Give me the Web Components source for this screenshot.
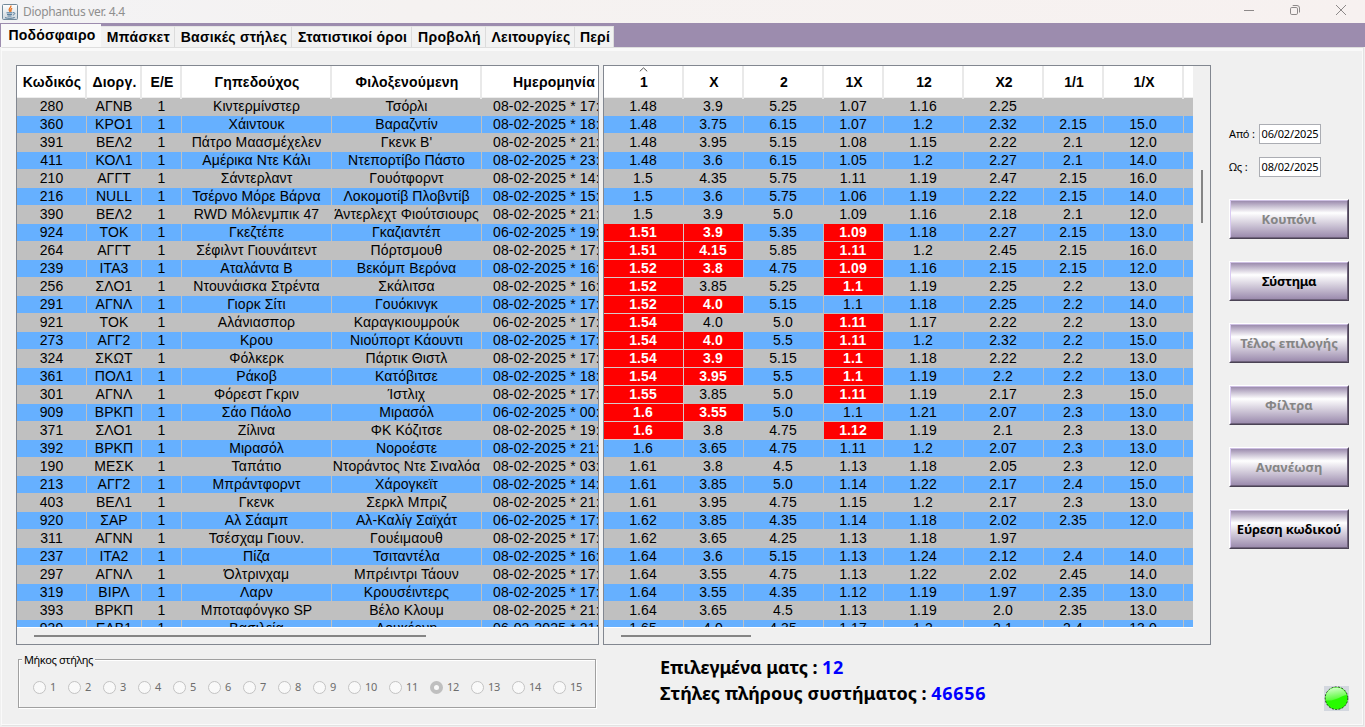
<!DOCTYPE html>
<html lang="el">
<head>
<meta charset="utf-8">
<title>Diophantus ver. 4.4</title>
<style>
  body {
    margin: 0;
    overflow: hidden;
    background: #f0f0f0;
    font-family: "Liberation Sans", Arial, sans-serif;
    color: #000;
  }
</style>
</head>
<body>
<app-window></app-window>

<script>
  const UI_FONT = `"Noto Sans", "Open Sans", sans-serif`;

  const MATCHES = `
280|ΑΓΝΒ|1|Κιντερμίνστερ|Τσόρλι|08-02-2025 * 17:|1.48|3.9|5.25|1.07|1.16|2.25||
360|ΚΡΟ1|1|Χάιντουκ|Βαραζντίν|08-02-2025 * 18:|1.48|3.75|6.15|1.07|1.2|2.32|2.15|15.0
391|ΒΕΛ2|1|Πάτρο Μαασμέχελεν|Γκενκ Β'|08-02-2025 * 21:|1.48|3.95|5.15|1.08|1.15|2.22|2.1|12.0
411|ΚΟΛ1|1|Αμέρικα Ντε Κάλι|Ντεπορτίβο Πάστο|08-02-2025 * 23:|1.48|3.6|6.15|1.05|1.2|2.27|2.1|14.0
210|ΑΓΓΤ|1|Σάντερλαντ|Γουότφορντ|08-02-2025 * 14:|1.5|4.35|5.75|1.11|1.19|2.47|2.15|16.0
216|NULL|1|Τσέρνο Μόρε Βάρνα|Λοκομοτίβ Πλοβντίβ|08-02-2025 * 15:|1.5|3.6|5.75|1.06|1.19|2.22|2.15|14.0
390|ΒΕΛ2|1|RWD Μόλενμπικ 47|Άντερλεχτ Φιούτσιουρς|08-02-2025 * 21:|1.5|3.9|5.0|1.09|1.16|2.18|2.1|12.0
924|ΤΟΚ|1|Γκεζτέπε|Γκαζιαντέπ|06-02-2025 * 19:|!1.51|!3.9|5.35|!1.09|1.18|2.27|2.15|13.0
264|ΑΓΓΤ|1|Σέφιλντ Γιουνάιτεντ|Πόρτσμουθ|08-02-2025 * 17:|!1.51|!4.15|5.85|!1.11|1.2|2.45|2.15|16.0
239|ΙΤΑ3|1|Αταλάντα Β|Βεκόμπ Βερόνα|08-02-2025 * 16:|!1.52|!3.8|4.75|!1.09|1.16|2.15|2.15|12.0
256|ΣΛΟ1|1|Ντουνάισκα Στρέντα|Σκάλιτσα|08-02-2025 * 16:|!1.52|3.85|5.25|!1.1|1.19|2.25|2.2|13.0
291|ΑΓΝΛ|1|Γιορκ Σίτι|Γουόκινγκ|08-02-2025 * 17:|!1.52|!4.0|5.15|1.1|1.18|2.25|2.2|14.0
921|ΤΟΚ|1|Αλάνιασπορ|Καραγκιουμρούκ|06-02-2025 * 17:|!1.54|4.0|5.0|!1.11|1.17|2.22|2.2|13.0
273|ΑΓΓ2|1|Κρου|Νιούπορτ Κάουντι|08-02-2025 * 17:|!1.54|!4.0|5.5|!1.11|1.2|2.32|2.2|15.0
324|ΣΚΩΤ|1|Φόλκερκ|Πάρτικ Θιστλ|08-02-2025 * 17:|!1.54|!3.9|5.15|!1.1|1.18|2.22|2.2|13.0
361|ΠΟΛ1|1|Ράκοβ|Κατόβιτσε|08-02-2025 * 18:|!1.54|!3.95|5.5|!1.1|1.19|2.2|2.2|13.0
301|ΑΓΝΛ|1|Φόρεστ Γκριν|Ίστλιχ|08-02-2025 * 17:|!1.55|3.85|5.0|!1.11|1.19|2.17|2.3|15.0
909|ΒΡΚΠ|1|Σάο Πάολο|Μιρασόλ|06-02-2025 * 00:|!1.6|!3.55|5.0|1.1|1.21|2.07|2.3|13.0
371|ΣΛΟ1|1|Ζίλινα|ΦΚ Κόζιτσε|08-02-2025 * 19:|!1.6|3.8|4.75|!1.12|1.19|2.1|2.3|13.0
392|ΒΡΚΠ|1|Μιρασόλ|Νοροέστε|08-02-2025 * 21:|1.6|3.65|4.75|1.11|1.2|2.07|2.3|13.0
190|ΜΕΣΚ|1|Ταπάτιο|Ντοράντος Ντε Σιναλόα|08-02-2025 * 03:|1.61|3.8|4.5|1.13|1.18|2.05|2.3|12.0
213|ΑΓΓ2|1|Μπράντφορντ|Χάρογκεϊτ|08-02-2025 * 14:|1.61|3.85|5.0|1.14|1.22|2.17|2.4|15.0
403|ΒΕΛ1|1|Γκενκ|Σερκλ Μπριζ|08-02-2025 * 21:|1.61|3.95|4.75|1.15|1.2|2.17|2.3|13.0
920|ΣΑΡ|1|Αλ Σάαμπ|Αλ-Καλίγ Σαϊχάτ|06-02-2025 * 17:|1.62|3.85|4.35|1.14|1.18|2.02|2.35|12.0
311|ΑΓΝΝ|1|Τσέσχαμ Γιουν.|Γουέιμαουθ|08-02-2025 * 17:|1.62|3.65|4.25|1.13|1.18|1.97||
237|ΙΤΑ2|1|Πίζα|Τσιταντέλα|08-02-2025 * 16:|1.64|3.6|5.15|1.13|1.24|2.12|2.4|14.0
297|ΑΓΝΛ|1|Όλτρινχαμ|Μπρέιντρι Τάουν|08-02-2025 * 17:|1.64|3.55|4.75|1.13|1.22|2.02|2.45|14.0
319|ΒΙΡΛ|1|Λαρν|Κρουσέιντερς|08-02-2025 * 17:|1.64|3.55|4.35|1.12|1.19|1.97|2.35|13.0
393|ΒΡΚΠ|1|Μποταφόνγκο SP|Βέλο Κλουμ|08-02-2025 * 21:|1.64|3.65|4.5|1.13|1.19|2.0|2.35|13.0
939|ΕΛΒ1|1|Βασιλεία|Λουκέρνη|06-02-2025 * 21:|1.65|4.0|4.35|1.17|1.2|2.1|2.4|13.0
`.trim().split("\n").map(line => line.split("|"));

  const TABLES = {
    fixtures: {
      widths: [70, 55, 40, 150, 150, 117],
      heads: ["Κωδικός", "Διοργ.", "Ε/Ε", "Γηπεδούχος", "Φιλοξενούμενη", "Ημερομηνία"],
      rows: MATCHES.map(m => m.slice(0, 6))
    },
    odds: {
      widths: [80, 60, 80, 60, 80, 80, 60, 80, 60],
      heads: ["1", "X", "2", "1X", "12", "X2", "1/1", "1/X", ""],
      rows: MATCHES.map(m => [...m.slice(6), ""]),
      sorted: 0
    }
  };

  function render(element, html) {
    element.attachShadow({ mode: "open" }).innerHTML = html;
  }

  class TitleBar extends HTMLElement {
    constructor() {
      super();
      render(this, `
        <style>
          :host {
            display: flex;
            align-items: center;
            height: 23px;
            box-sizing: border-box;
            padding: 0 18px 0 2px;
            background: linear-gradient(90deg, #f3f3f5, #f5f2f1 30%, #f7f1f0);
            font: 12px ${UI_FONT};
            color: #8f8f8f;
          }
          .title { flex: 1; margin-left: 5px; letter-spacing: -0.32px; }
          .controls { display: flex; gap: 34px; margin-top: -3px; }
          svg { display: block; }
        </style>
        <svg width="16" height="16" viewBox="0 0 16 16">
          <defs>
            <linearGradient id="face" x2="0" y2="1"><stop stop-color="#fff"/><stop offset="1" stop-color="#cdd5dc"/></linearGradient>
          </defs>
          <rect x=".5" y=".5" width="15" height="15" rx="1" fill="url(#face)" stroke="#72899a"/>
          <path d="M8.8 1.5c1 2-2.6 2.9-1.5 4.8l1 1.5M10.2 4.4c-1.6.8-1.8 1.6-.8 3.1" fill="none" stroke="#e76f1c" stroke-width="1.3"/>
          <path d="M4.5 8.8h6M5 10.4h5M5.5 12h4M3 13.7c2.5.8 7.5.8 9.7-.2M11 8.7c2.6-.5 2.3 1.8-.2 2.4" fill="none" stroke="#4e7696"/>
        </svg>
        <span class="title"><slot></slot></span>
        <div class="controls">
          <svg width="12" height="12" fill="none" stroke="#8d8989"><path d="M1 6.5h10"/></svg>
          <svg width="12" height="12" fill="none" stroke="#8d8989"><rect x="1.5" y="3.5" width="7" height="7" rx="1.3"/><path d="M3.7 1.5H8a2.5 2.5 0 0 1 2.5 2.5v4.5"/></svg>
          <svg width="12" height="12" fill="none" stroke="#8d8989"><path d="M1 1l10 10M11 1L1 11"/></svg>
        </div>`);
    }
  }

  class TabBar extends HTMLElement {
    constructor() {
      super();
      render(this, `
        <style>
          :host {
            display: flex;
            align-items: flex-end;
            height: 24px;
            padding-left: 1px;
            background: #9c8cae;
          }
        </style>
        <slot></slot>`);
    }
  }

  class TabItem extends HTMLElement {
    constructor() {
      super();
      render(this, `
        <style>
          :host {
            display: block;
            box-sizing: border-box;
            width: var(--w);
            height: 21px;
            padding-left: 2px;
            border-right: 1px solid #dcdcdc;
            border-top: 1px solid #e4e4e4;
            background: #f2f2f2;
            font-size: 14px;
            font-weight: bold;
            line-height: 21px;
            text-align: center;
            white-space: nowrap;
            letter-spacing: var(--ls, 0);
          }
          :host([selected]) {
            height: 23px;
            border: 0;
            background: #f9f9f9;
            line-height: 23px;
          }
        </style>
        <slot></slot>`);
    }
  }

  class DataTable extends HTMLElement {
    constructor() {
      super();
      const { widths, heads, rows, sorted } = TABLES[this.getAttribute("source")];
      const caret = `<svg width="9" height="5" viewBox="0 0 9 5"><path d="M.8 4.3 4.5.9l3.7 3.4" fill="none" stroke="#555"/></svg>`;
      render(this, `
        <style>
          :host {
            display: grid;
            grid-template: 562px 1fr / 1fr var(--bar, 0px);
            box-sizing: border-box;
            width: var(--w);
            height: 580px;
            border: 1px solid #828790;
            background: #f0f0f0;
          }
          .view { overflow: hidden; border-bottom: 1px solid #fff; }
          .row, .head {
            display: grid;
            grid-template-columns: ${widths.map(w => w + "px").join(" ")};
            text-align: center;
            white-space: nowrap;
          }
          .head {
            height: 31px;
            background: #fff;
            border-bottom: 1px solid #ededed;
            font-size: 14px;
            font-weight: bold;
            line-height: 33px;
          }
          .head div {
            position: relative;
            padding-left: 2px;
            border-right: 2px solid #e9e9e9;
            letter-spacing: var(--head-ls, 0);
          }
          .head div:nth-child(6) {
            text-align: var(--date-align, center);
            padding-left: var(--date-head-pad, 2px);
            border-right-width: var(--date-edge, 2px);
          }
          .head svg { position: absolute; top: 1px; left: 35px; }
          .row {
            height: 18px;
            background: #c0c0c0;
            font-size: 14px;
            line-height: 17px;
            letter-spacing: 0.1px;
          }
          .row div {
            height: 17px;
            padding-right: var(--cell-pad, 1px);
            border-right: 1px solid #c0c0c0;
            border-bottom: 1px solid #c0c0c0;
          }
          .row div:nth-child(6) {
            text-align: var(--date-align, center);
            padding-left: var(--date-pad, 0);
            border-right-width: var(--date-edge, 1px);
            letter-spacing: var(--date-ls, 0.1px);
          }
          .row:nth-child(odd) div { background: #66b0ff; }
          .row div.hit {
            background: #f00;
            border-color: #d8c8c8;
            color: #fff;
            font-weight: bold;
          }
          .across, .down { display: flex; }
          .across::before {
            content: "";
            width: var(--thumb);
            height: 2px;
            margin: 7px 0 0 17px;
            background: #858585;
          }
          .down { overflow: hidden; }
          .down::before {
            content: "";
            width: 2px;
            height: 53px;
            margin: 104px 0 0 8px;
            background: #858585;
          }
        </style>
        <div class="view">
          <div class="head">${heads.map((h, i) => `<div>${i === sorted ? caret : ""}${h}</div>`).join("")}</div>
          ${rows.map(row => `<div class="row">${row.map(v =>
            v[0] === "!" ? `<div class="hit">${v.slice(1)}</div>` : `<div>${v}</div>`).join("")}</div>`).join("")}
        </div>
        <div class="down"></div>
        <div class="across"></div>`);
    }
  }

  class DateField extends HTMLElement {
    constructor() {
      super();
      render(this, `
        <style>
          :host {
            display: grid;
            grid-template-columns: 30px 62px;
            height: 20px;
            line-height: 20px;
            font-family: ${UI_FONT};
            font-size: 11px;
            white-space: nowrap;
            letter-spacing: -0.15px;
          }
          .box {
            box-sizing: border-box;
            height: 20px;
            border: 1px solid #abadb3;
            background: #fff;
            line-height: 18px;
            text-align: center;
          }
        </style>
        <span><slot></slot></span>
        <div class="box">${this.getAttribute("value")}</div>`);
    }
  }

  class ActionButton extends HTMLElement {
    constructor() {
      super();
      render(this, `
        <style>
          :host {
            display: block;
            box-sizing: border-box;
            width: 120px;
            height: 40px;
            border: 1px solid;
            border-color: #fff #4b4355 #4b4355 #fff;
          }
          button {
            display: block;
            width: 100%;
            height: 100%;
            padding: 0;
            border: 1px solid;
            border-color: #cdbfe2 #6f637c #6f637c #dacbf2;
            background: linear-gradient(#9c8cae, #fff 33%, #9c8cae);
            color: #000;
            font: bold 13px ${UI_FONT};
            letter-spacing: var(--ls, -0.2px);
            white-space: nowrap;
          }
          button:disabled { color: #858585; letter-spacing: 0; }
        </style>
        <button ${this.hasAttribute("disabled") ? "disabled" : ""}><slot></slot></button>`);
    }
  }

  class RadioStrip extends HTMLElement {
    constructor() {
      super();
      const count = Number(this.getAttribute("count"));
      const value = Number(this.getAttribute("value"));
      const items = Array.from({ length: count }, (_, i) => i + 1);
      render(this, `
        <style>
          :host {
            display: block;
            position: relative;
            box-sizing: border-box;
            width: 578px;
            height: 49px;
            border: 1px solid #a0a0a0;
            box-shadow: 1px 1px #fff, inset 1px 1px #fff;
            font-family: ${UI_FONT};
            font-size: 11px;
          }
          .legend {
            position: absolute;
            top: -8px;
            left: 3px;
            padding: 0 2px;
            background: #f0f0f0;
            line-height: 15px;
            letter-spacing: -0.42px;
          }
          .items { display: flex; padding: 21px 0 0 14px; }
          .item {
            display: flex;
            gap: 4px;
            width: 35px;
            height: 13px;
            line-height: 12px;
            color: #6d6d6d;
            letter-spacing: -0.2px;
          }
          .item.wide { width: 41px; }
          i {
            box-sizing: border-box;
            width: 13px;
            height: 13px;
            border: 1px solid #c3c3c3;
            border-radius: 50%;
            background: #f9f9f9;
          }
          .on i { border: 4px solid #bfbfbf; }
        </style>
        <span class="legend"><slot></slot></span>
        <div class="items">
          ${items.map(n => `<div class="item ${n > 9 ? "wide" : ""} ${n === value ? "on" : ""}"><i></i><span>${n}</span></div>`).join("")}
        </div>`);
    }
  }

  class StatLine extends HTMLElement {
    constructor() {
      super();
      render(this, `
        <style>
          :host {
            display: block;
            height: 26px;
            line-height: 26px;
            font-family: ${UI_FONT};
            font-size: 18px;
            font-weight: 700;
            white-space: nowrap;
            letter-spacing: var(--ls, 0);
          }
          ::slotted(b) { color: #00f; font-weight: 700; letter-spacing: 0.7px; }
        </style>
        <slot></slot>`);
    }
  }

  class StatusLamp extends HTMLElement {
    constructor() {
      super();
      render(this, `
        <style>
          :host { display: block; width: 25px; height: 25px; background: #d3d7df; }
          svg { display: block; }
        </style>
        <svg width="25" height="25" viewBox="0 0 25 25">
          <defs>
            <linearGradient id="shine" x1=".2" y1="0" x2=".45" y2="1"><stop stop-color="#d8ffd0"/><stop offset="1" stop-color="#4dfa2c"/></linearGradient>
          </defs>
          <circle cx="12.5" cy="12.2" r="11.3" fill="#27fb00" stroke="#111" stroke-width=".8" stroke-dasharray="2 1.4"/>
          <path d="M2 14.5C.5 6 6.5 1.6 12.5 1.6c5 0 8.8 3 10 7.4C16 10 12 15.5 2 14.5z" fill="url(#shine)"/>
        </svg>`);
    }
  }

  class AppWindow extends HTMLElement {
    constructor() {
      super();
      render(this, `
        <style>
          :host {
            display: grid;
            grid-template-rows: 23px 24px 1fr;
            width: 1365px;
            height: 727px;
            background: #f0f0f0;
          }
          .page {
            display: grid;
            grid-template: 580px 1fr / 1195px 1fr;
            column-gap: 18px;
            box-sizing: border-box;
            margin: 0 1px 1px;
            padding: 17px 0 0 14px;
            border: 1px solid #e3e3e3;
            border-top-color: #dedede;
            border-left-color: #fafafa;
            box-shadow: inset 0 3px #f9f9f9, inset -1px -1px #fafafa;
          }
          .panes { display: flex; gap: 4px; }
          .side { display: flex; flex-direction: column; padding-top: 59px; }
          date-field + date-field { margin-top: 13px; }
          .buttons { display: flex; flex-direction: column; gap: 22px; margin-top: 22px; }
          .foot { display: flex; padding: 14px 0 0 2px; }
          .stats { margin: -5px 0 0 64px; }
          .lamp { display: flex; padding: 41px 0 0 95px; }
        </style>
        <title-bar>Diophantus ver. 4.4</title-bar>
        <tab-bar>
          <tab-item selected style="--w: 100px; --ls: 0.2px">Ποδόσφαιρο</tab-item>
          <tab-item style="--w: 74px; --ls: 0.35px">Μπάσκετ</tab-item>
          <tab-item style="--w: 117px; --ls: 0.2px">Βασικές στήλες</tab-item>
          <tab-item style="--w: 120px; --ls: 0.2px">Στατιστικοί όροι</tab-item>
          <tab-item style="--w: 74px; --ls: 0.3px">Προβολή</tab-item>
          <tab-item style="--w: 89px; --ls: 0.2px">Λειτουργίες</tab-item>
          <tab-item style="--w: 39px; --ls: 0.2px">Περί</tab-item>
        </tab-bar>
        <div class="page">
          <div class="panes">
            <data-table source="fixtures" style="--w: 583px; --thumb: 392px; --head-ls: 0.2px; --cell-pad: 0; --date-align: left; --date-head-pad: 31px; --date-pad: 11px; --date-edge: 0; --date-ls: 0.15px"></data-table>
            <data-table source="odds" style="--w: 608px; --thumb: 130px; --bar: 17px"></data-table>
          </div>
          <div class="side">
            <date-field value="06/02/2025">Από :</date-field>
            <date-field value="08/02/2025">Ως :</date-field>
            <div class="buttons">
              <action-button disabled>Κουπόνι</action-button>
              <action-button style="--ls: -0.4px">Σύστημα</action-button>
              <action-button disabled>Τέλος επιλογής</action-button>
              <action-button disabled>Φίλτρα</action-button>
              <action-button disabled>Ανανέωση</action-button>
              <action-button>Εύρεση κωδικού</action-button>
            </div>
          </div>
          <div class="foot">
            <radio-strip count="15" value="12">Μήκος στήλης</radio-strip>
            <div class="stats">
              <stat-line style="--ls: -0.12px">Επιλεγμένα ματς : <b>12</b></stat-line>
              <stat-line style="--ls: -0.04px">Στήλες πλήρους συστήματος : <b>46656</b></stat-line>
            </div>
          </div>
          <div class="lamp"><status-lamp></status-lamp></div>
        </div>`);
    }
  }

  customElements.define("title-bar", TitleBar);
  customElements.define("tab-bar", TabBar);
  customElements.define("tab-item", TabItem);
  customElements.define("data-table", DataTable);
  customElements.define("date-field", DateField);
  customElements.define("action-button", ActionButton);
  customElements.define("radio-strip", RadioStrip);
  customElements.define("stat-line", StatLine);
  customElements.define("status-lamp", StatusLamp);
  customElements.define("app-window", AppWindow);
</script>
</body>
</html>
